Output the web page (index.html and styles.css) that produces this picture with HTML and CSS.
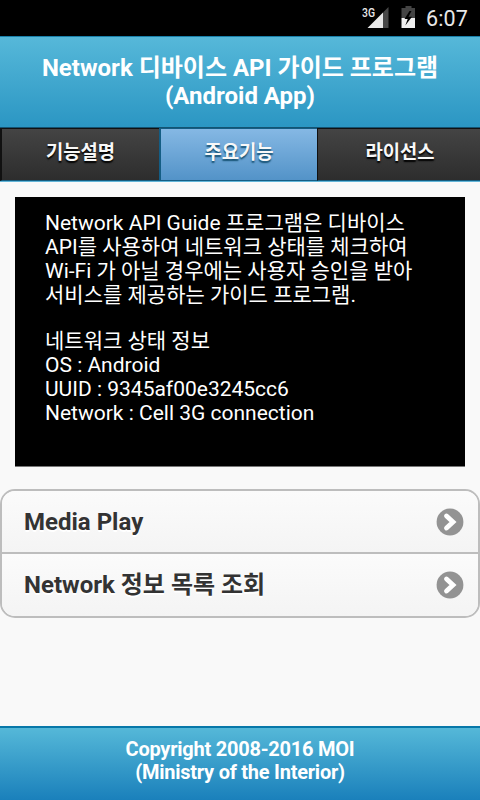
FILE: index.html
```
<!DOCTYPE html>
<html lang="ko">
<head>
<meta charset="utf-8">
<title>Network API Guide</title>
<link rel="stylesheet" href="styles.css">
</head>
<body>
<div class="status">
  <svg class="signal" width="28" height="24" viewBox="0 0 28 24"><path fill="#484848" d="M22 9.500 27.500 4v21H22z"/><path fill="#e8e8e8" d="M6.500 25 22 9.500V25z"/><text class="net" x="1" y="13.500" textLength="13" lengthAdjust="spacingAndGlyphs">3G</text></svg>
  <svg class="battery" width="15" height="22" viewBox="0 0 15 22"><path fill="#444" d="M4.500 0h6v2H14v10H0.500V2h4z"/><path fill="#f0f0f0" d="M.5 12H14v10H.5z"/><path d="M8.500 5 3.500 13h3.200L4.300 19.500 11 10.800H7.500L10.500 5z"/></svg>
  <span class="clock">6:07</span>
</div>
<header class="header"><h1><span>Network 디바이스 API 가이드 프로그램</span><span>(Android App)</span></h1></header>
<nav class="tabs"><a class="tab">기능설명</a><a class="tab active">주요기능</a><a class="tab">라이선스</a></nav>
<main class="content">
  <section class="info">
    <p>Network API Guide 프로그램은 디바이스</p>
    <p>API를 사용하여 네트워크 상태를 체크하여</p>
    <p>Wi-Fi 가 아닐 경우에는 사용자 승인을 받아</p>
    <p>서비스를 제공하는 가이드 프로그램.</p>
    <p class="gap">네트워크 상태 정보</p>
    <p>OS : Android</p>
    <p>UUID : 9345af00e3245cc6</p>
    <p>Network : Cell 3G connection</p>
  </section>
  <ul class="list">
    <li><span>Media Play</span><svg width="28" height="28" viewBox="0 0 28 28"><circle cx="14" cy="14" r="13.400" fill="#939393"/><path class="chevron" d="M10.500 8 17 14l-6.500 6"/></svg></li>
    <li><span>Network 정보 목록 조회</span><svg width="28" height="28" viewBox="0 0 28 28"><circle cx="14" cy="14" r="13.400" fill="#939393"/><path class="chevron" d="M10.500 8 17 14l-6.500 6"/></svg></li>
  </ul>
</main>
<footer class="footer"><span>Copyright 2008-2016 MOI</span><span>(Ministry of the Interior)</span></footer>
</body>
</html>
```

FILE: styles.css
```
* { box-sizing: border-box; }
body {
  margin: 0; width: 480px; height: 800px; overflow: hidden;
  display: flex; flex-direction: column;
  background: #f9f9f9; font-family: Roboto, "Noto Sans CJK KR", sans-serif;
}
.status {
  height: 36px; flex: none; background: #000; color: #e8e8e8;
  display: flex; justify-content: flex-end; align-items: flex-start; padding: 3px 12px 0 0;
}
.signal { overflow: visible; margin-right: 12px; }
.battery { margin: 3px 10px 0 0; }
.net { font-size: 12px; font-weight: 500; fill: #e8e8e8; }
.clock { font-size: 21.5px; line-height: 32px; letter-spacing: 0.15px; }
.header {
  height: 91px; flex: none; border-top: 1px solid #1980aa;
  background: linear-gradient(#56b8d9, #2b96c3); color: #fff;
  padding-top: 17px; text-align: center;
}
h1 { margin: 0; font-size: 24px; line-height: 28px; }
h1 span, .footer span { display: block; height: 28px; white-space: nowrap; }
.tabs {
  height: 55px; flex: none; display: grid; grid-template-columns: 159px 158px 163px;
  border-top: 1px solid #145372; border-bottom: 1px solid #62b5d8;
}
.tab {
  border: solid #111; border-width: 1px 0 1px 2px; border-bottom-color: #155d80;
  background: linear-gradient(#444, #2d2d2d); color: #f8f8f8;
  font-size: 18.8px; font-weight: bold; line-height: 24px; padding-top: 12px;
  text-align: center; text-shadow: 0 1.5px 1.5px #000;
}
.tab.active {
  border-color: #145d84; background: linear-gradient(#85b8e4, #5393c8);
  text-shadow: 0 1.5px 1.5px #145072;
}
.tab:last-child { border-left-width: 1px; padding-left: 2px; }
.content { flex: 1; padding-top: 15px; }
.info {
  height: 270px; margin: 0 15px; padding: 14px 30px; background: #000; color: #fff;
  border-bottom: 1px solid #777; font-size: 21px;
}
.info p { margin: 0; height: 24px; line-height: 24px; white-space: nowrap; }
.info .gap { margin-top: 22px; }
.list {
  list-style: none; margin: 22px 0 0; padding: 0; height: 129px;
  border: 2px solid #bdbdbd;
  border-radius: 15px; overflow: hidden;
  font-size: 24px; font-weight: bold; color: #333;
}
.list li {
  height: 61px; display: flex; align-items: center; justify-content: space-between;
  padding: 0 14px 0 22px; background: linear-gradient(#fbfbfb, #f4f4f4);
  line-height: 28px; text-shadow: 0 1.5px 0 #fff;
}
.list li + li { height: 64px; border-top: 2px solid #bdbdbd; }
.list span { height: 28px; white-space: nowrap; }
.chevron { fill: none; stroke: #fff; stroke-width: 4.8; stroke-linecap: round; }
.footer {
  height: 74px; flex: none; border-top: 2px solid #0878a9;
  background: linear-gradient(#55b8d8, #1a80bb); color: #fff;
  padding-top: 10px; text-align: center; font-size: 20px; letter-spacing: -0.24px;
  font-weight: bold; line-height: 23px;
}
.footer span { height: 23px; }
```
